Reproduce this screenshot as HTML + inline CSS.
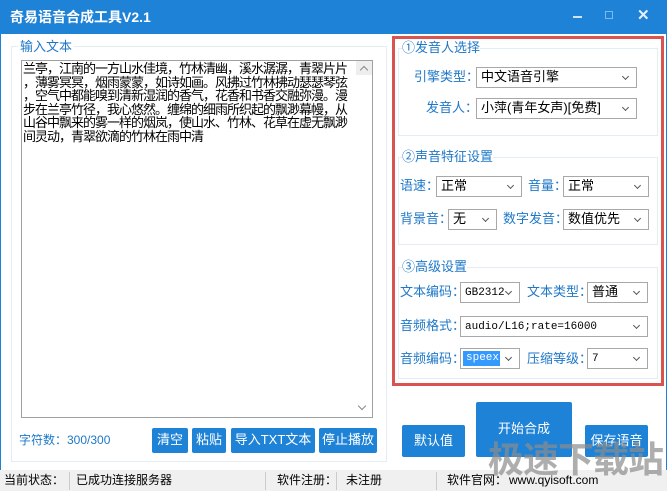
<!DOCTYPE html>
<html><head><meta charset="utf-8"><style>
*{box-sizing:border-box;margin:0;padding:0}
body{width:667px;height:491px;overflow:hidden;background:#fff;font-family:"Liberation Sans","Noto Sans CJK SC",sans-serif;font-size:12px;position:relative;line-height:1.15}
.a{position:absolute}
.title{left:0;top:0;width:667px;height:34px;background:#1e82d6;color:#fff;font-weight:bold;font-size:14px;padding:9px 0 0 10px}
.frame{left:0;top:34px;width:667px;height:457px;border:1px solid #1e82d6;border-top:none}
.lbl{color:#1e78c8;font-size:13px}
.sel{height:21px;border:1px solid #a8a8a8;background:#fff;font-size:13px;padding:2px 4px;color:#000}
.sel:after{content:"";position:absolute;right:8px;top:6px;width:4px;height:4px;border-right:1.5px solid #555;border-bottom:1.5px solid #555;transform:rotate(45deg)}
.btn{background:#1e82d6;color:#fff;font-size:13px;text-align:center;border-radius:2px}
.grp{border:1px solid #e4ecf4}
.sb{top:470px;height:21px;background:#f0f0f0;font-size:12px;padding-top:4px;color:#000}
</style></head><body>
<div class="a title">奇易语音合成工具V2.1</div>
<div class="a" style="left:573px;top:16px;width:9px;height:2px;background:#cfe4f8"></div>
<div class="a" style="left:605px;top:11px;width:8px;height:8px;border:1px solid #7fb8ea"></div>
<div class="a" style="left:637px;top:7px;color:#e4f0fc;font-size:15px;font-weight:bold">✕</div>
<div class="a frame"></div>
<div class="a grp" style="left:11px;top:46px;width:376px;height:416px"></div>
<div class="a lbl" style="left:18px;top:40px;background:#fff;padding:0 2px">输入文本</div>
<div class="a" style="left:21px;top:60px;width:352px;height:358px;border:1px solid #a0a0a0;font-size:13px;line-height:13.5px;padding:1px 0 0 1px;letter-spacing:-1px;white-space:nowrap;overflow:hidden">兰亭，江南的一方山水佳境，竹林清幽，溪水潺潺，青翠片片<br>，薄雾冥冥，烟雨蒙蒙，如诗如画。风拂过竹林拂动瑟瑟琴弦<br>，空气中都能嗅到清新湿润的香气，花香和书香交融弥漫。漫<br>步在兰亭竹径，我心悠然。缠绵的细雨所织起的飘渺幕幔，从<br>山谷中飘来的雾一样的烟岚，使山水、竹林、花草在虚无飘渺<br>间灵动，青翠欲滴的竹林在雨中清</div>
<div class="a" style="left:356px;top:61px;width:16px;height:14px;background:#eee"></div>
<div class="a" style="left:361px;top:67px;width:6px;height:6px;border-left:1.5px solid #888;border-top:1.5px solid #888;transform:rotate(45deg)"></div>
<div class="a" style="left:359px;top:403px;width:6px;height:6px;border-right:1.5px solid #888;border-bottom:1.5px solid #888;transform:rotate(45deg)"></div>
<div class="a lbl" style="left:19px;top:434px;font-size:12px">字符数：300/300</div>
<div class="a btn" style="left:152px;top:428px;width:36px;height:25px;padding-top:5px">清空</div>
<div class="a btn" style="left:192px;top:428px;width:34px;height:25px;padding-top:5px">粘贴</div>
<div class="a btn" style="left:231px;top:428px;width:84px;height:25px;padding-top:5px">导入TXT文本</div>
<div class="a btn" style="left:319px;top:428px;width:58px;height:25px;padding-top:5px">停止播放</div>

<div class="a" style="left:392px;top:36px;width:272px;height:350px;border:3px solid #d9534f"></div>
<div class="a grp" style="left:398px;top:48px;width:260px;height:88px"></div>
<div class="a lbl" style="left:402px;top:41px;background:#fff">①发音人选择</div>
<div class="a lbl" style="left:414px;top:70px">引擎类型：</div>
<div class="a sel" style="left:476px;top:67px;width:161px">中文语音引擎</div>
<div class="a lbl" style="left:426px;top:101px">发音人：</div>
<div class="a sel" style="left:476px;top:98px;width:161px">小萍(青年女声)[免费]</div>

<div class="a grp" style="left:398px;top:157px;width:260px;height:88px"></div>
<div class="a lbl" style="left:402px;top:150px;background:#fff">②声音特征设置</div>
<div class="a lbl" style="left:400px;top:179px">语速：</div>
<div class="a sel" style="left:436px;top:176px;width:86px">正常</div>
<div class="a lbl" style="left:528px;top:179px">音量：</div>
<div class="a sel" style="left:563px;top:176px;width:86px">正常</div>
<div class="a lbl" style="left:400px;top:212px">背景音：</div>
<div class="a sel" style="left:448px;top:209px;width:49px">无</div>
<div class="a lbl" style="left:503px;top:212px">数字发音：</div>
<div class="a sel" style="left:563px;top:209px;width:86px">数值优先</div>

<div class="a grp" style="left:398px;top:267px;width:260px;height:112px"></div>
<div class="a lbl" style="left:402px;top:260px;background:#fff">③高级设置</div>
<div class="a lbl" style="left:400px;top:285px">文本编码：</div>
<div class="a sel" style="left:460px;top:282px;width:60px;font-family:'Liberation Mono',monospace;font-size:11px;padding-top:4px">GB2312</div>
<div class="a lbl" style="left:527px;top:285px">文本类型：</div>
<div class="a sel" style="left:587px;top:282px;width:61px">普通</div>
<div class="a lbl" style="left:400px;top:319px">音频格式：</div>
<div class="a sel" style="left:460px;top:316px;width:188px;font-family:'Liberation Mono',monospace;font-size:11px;padding-top:4px">audio/L16;rate=16000</div>
<div class="a lbl" style="left:400px;top:352px">音频编码：</div>
<div class="a sel" style="left:460px;top:348px;width:60px;font-family:'Liberation Mono',monospace;font-size:11px;padding:2px"><span style="background:#3399ff;color:#fff;padding:1px 3px;display:inline-block;width:37px">speex</span></div>
<div class="a lbl" style="left:527px;top:352px">压缩等级：</div>
<div class="a sel" style="left:587px;top:348px;width:61px;font-family:'Liberation Mono',monospace;font-size:11px;padding-top:4px">7</div>

<div class="a btn" style="left:402px;top:425px;width:63px;height:32px;padding-top:9px">默认值</div>
<div class="a btn" style="left:476px;top:402px;width:96px;height:55px;padding-top:20px">开始合成</div>
<div class="a btn" style="left:585px;top:425px;width:63px;height:32px;padding-top:9px">保存语音</div>

<div class="a sb" style="left:0;width:667px"></div>
<div class="a sb" style="left:4px">当前状态：</div>
<div class="a" style="left:69px;top:472px;width:1px;height:18px;background:#ccc"></div>
<div class="a sb" style="left:76px">已成功连接服务器</div>
<div class="a" style="left:265px;top:472px;width:1px;height:18px;background:#ccc"></div>
<div class="a sb" style="left:277px">软件注册：</div>
<div class="a" style="left:336px;top:472px;width:1px;height:18px;background:#ccc"></div>
<div class="a sb" style="left:346px">未注册</div>
<div class="a" style="left:436px;top:472px;width:1px;height:18px;background:#ccc"></div>
<div class="a sb" style="left:447px">软件官网：</div>
<div class="a sb" style="left:509px;background:none">www.qyisoft.com</div>
<div class="a" style="left:488px;top:442px;font-size:36px;line-height:1;font-weight:bold;color:rgba(140,140,140,0.7);letter-spacing:-1px;z-index:5">极速下载站</div>
</body></html>
